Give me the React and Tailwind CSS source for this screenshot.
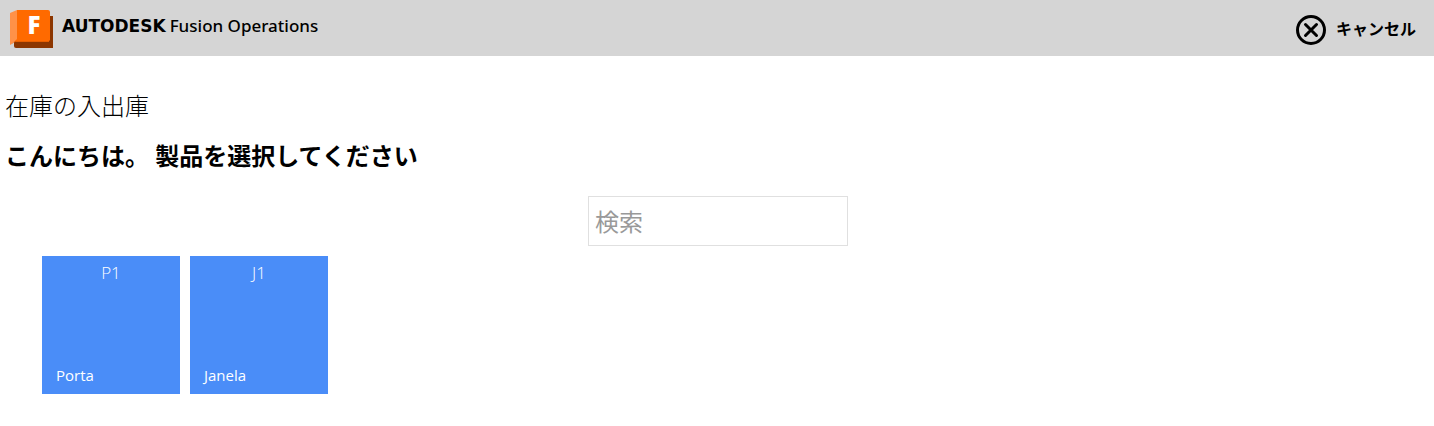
const products = [
  { code: 'P1', name: 'Porta' },
  { code: 'J1', name: 'Janela' },
];

function FusionLogo() {
  return (
    <svg width="44" height="40" viewBox="0 0 44 40" aria-hidden="true">
      <path d="M5 7H43V39H6Q4 39 4 37V33Z" fill="#8c3600" />
      <path d="M0 4L7 1V31L0 36Z" fill="#ff9148" />
      <path d="M0 36L7 31H39V33H5Z" fill="#e85f00" />
      <path d="M7 1H38Q40 1 40 3V31Q40 32 38 32H5L7 30Z" fill="#ff6a00" />
      <text
        x="24"
        y="25"
        textAnchor="middle"
        fill="#fff"
        className="font-['Open_Sans'] text-[24px] font-extrabold"
      >
        F
      </text>
    </svg>
  );
}

function CancelIcon() {
  return (
    <svg width="30" height="30" viewBox="0 0 30 30" fill="none" stroke="#000" strokeWidth="3" strokeLinecap="round" aria-hidden="true">
      <circle cx="15" cy="15" r="13.5" />
      <path d="M9.5 9.5L20.5 20.5M20.5 9.5L9.5 20.5" />
    </svg>
  );
}

export default function App() {
  return (
    <div className="min-h-screen bg-white font-['Open_Sans','Noto_Sans_CJK_JP',sans-serif] text-black" lang="ja">
      <header className="flex h-14 items-center justify-between bg-[#d5d5d5] pr-[18px] pl-[10px]">
        <a href="#" className="flex items-center gap-2 pt-[2px]">
          <FusionLogo />
          <span className="flex items-baseline gap-1 pb-[6px] whitespace-nowrap">
            <span className="font-['DejaVu_Sans',sans-serif] text-[17px] font-bold">AUTODESK</span>
            <span className="font-['Noto_Sans',sans-serif] text-[17px] font-medium">Fusion Operations</span>
          </span>
        </a>
        <button type="button" className="flex items-center gap-[10px] pt-1 text-base font-bold">
          <CancelIcon />
          <span className="pb-[2px]">キャンセル</span>
        </button>
      </header>
      <main>
        <h1 className="px-[5px] pt-8 text-2xl/9 font-light">在庫の入出庫</h1>
        <h2 className="px-[5px] pt-[14px] text-2xl/9 font-bold">こんにちは。 製品を選択してください</h2>
        <div className="flex justify-center pt-[22px] pl-[2px]">
          <input
            type="search"
            aria-label="検索"
            placeholder="検索"
            className="h-[50px] w-[260px] border border-[#e0e0e0] px-[6px] text-2xl placeholder:text-[#999]"
          />
        </div>
        <div className="flex flex-wrap gap-[10px] px-[42px] pt-[10px]">
          {products.map((p) => (
            <button
              key={p.code}
              type="button"
              className="flex size-[138px] flex-col justify-between bg-[#4a8df8] px-[14px] pt-1 pb-2 text-white"
            >
              <span className="w-full text-center text-[17px] font-light">{p.code}</span>
              <span className="text-left text-[15px]">{p.name}</span>
            </button>
          ))}
        </div>
      </main>
    </div>
  );
}
